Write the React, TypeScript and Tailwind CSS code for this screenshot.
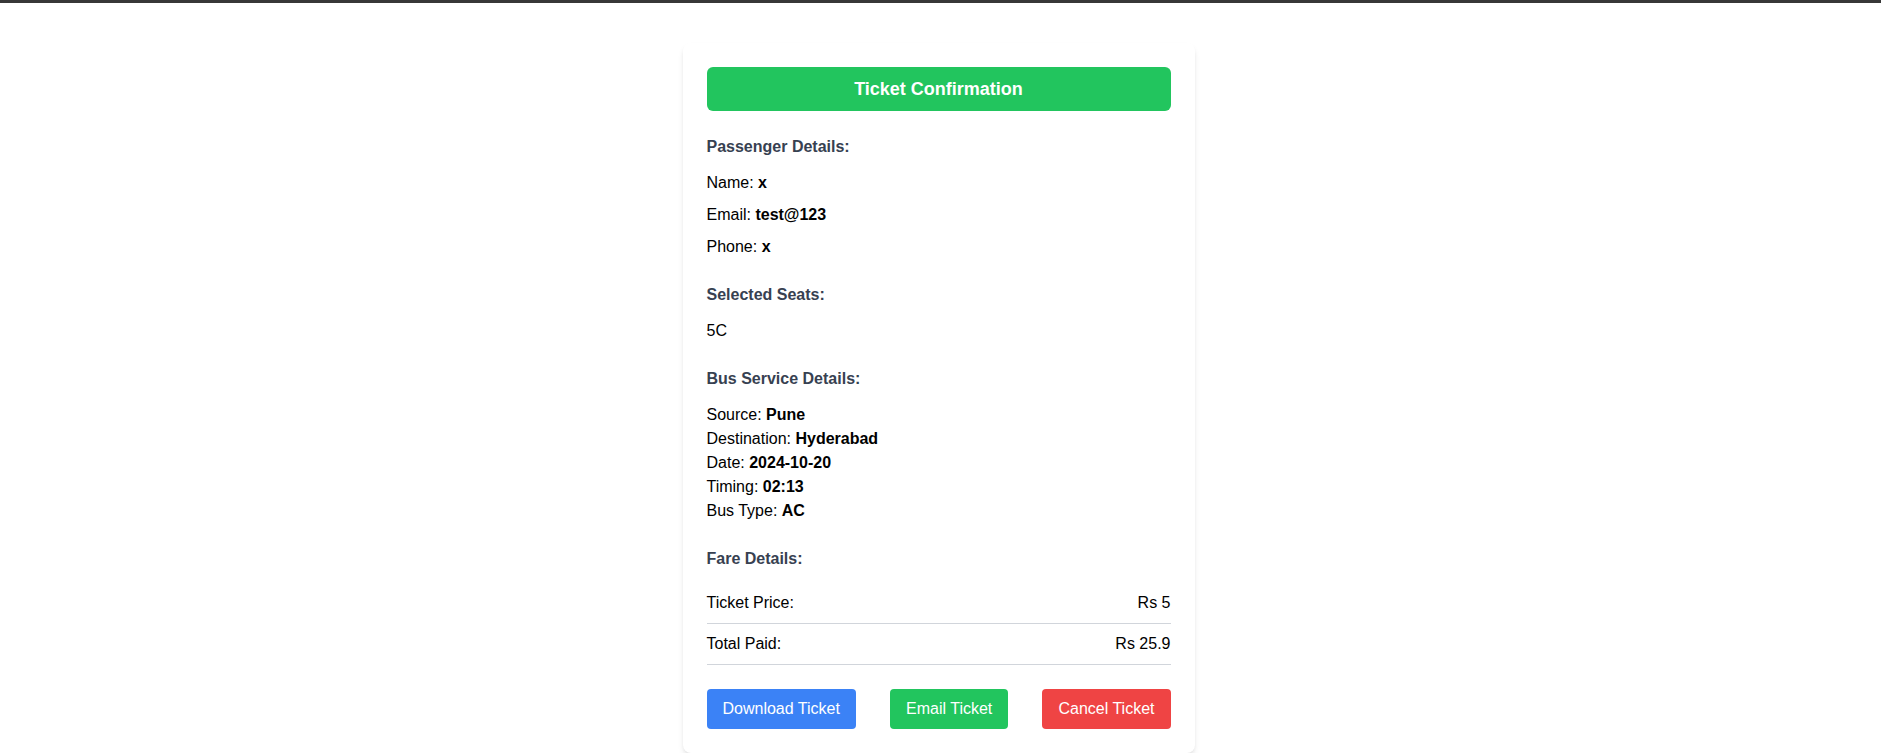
export default function App() {
  const passenger = [
    { label: 'Name', value: 'x' },
    { label: 'Email', value: 'test@123' },
    { label: 'Phone', value: 'x' },
  ];

  const service = [
    { label: 'Source', value: 'Pune' },
    { label: 'Destination', value: 'Hyderabad' },
    { label: 'Date', value: '2024-10-20' },
    { label: 'Timing', value: '02:13' },
    { label: 'Bus Type', value: 'AC' },
  ];

  return (
    <div className="min-h-screen bg-white text-black font-['Liberation_Sans',Arial,sans-serif]">
      <div className="h-[3px] bg-[#383838]" />
      <div className="max-w-lg mx-auto mt-10 bg-white rounded-lg shadow-md p-6 -translate-x-0.5">
        {/* Header */}
        <h1 className="bg-[#22c55e] text-white text-lg font-bold text-center py-2 rounded-md mb-6">
          Ticket Confirmation
        </h1>

        {/* Passenger */}
        <section className="mb-6">
          <h2 className="font-semibold text-[#374151] mb-3">Passenger Details:</h2>
          <div className="space-y-2">
            {passenger.map((p) => (
              <p key={p.label}>
                {p.label}: <span className="font-bold">{p.value}</span>
              </p>
            ))}
          </div>
        </section>

        {/* Seats */}
        <section className="mb-6">
          <h2 className="font-semibold text-[#374151] mb-3">Selected Seats:</h2>
          <p>5C</p>
        </section>

        {/* Bus service */}
        <section className="mb-6">
          <h2 className="font-semibold text-[#374151] mb-3">Bus Service Details:</h2>
          {service.map((s) => (
            <p key={s.label}>
              {s.label}: <span className="font-bold">{s.value}</span>
            </p>
          ))}
        </section>

        {/* Fare */}
        <section>
          <h2 className="font-semibold text-[#374151] mb-3">Fare Details:</h2>
          <div className="flex justify-between py-2 border-b border-[#d1d5db]">
            <span>Ticket Price:</span>
            <span>Rs 5</span>
          </div>
          <div className="flex justify-between py-2 border-b border-[#d1d5db]">
            <span>Total Paid:</span>
            <span>Rs 25.9</span>
          </div>
        </section>

        {/* Actions */}
        <div className="flex justify-between mt-6">
          <button className="bg-[#3b82f6] text-white px-4 py-2 rounded">Download Ticket</button>
          <button className="bg-[#22c55e] text-white px-4 py-2 rounded">Email Ticket</button>
          <button className="bg-[#ef4444] text-white px-4 py-2 rounded">Cancel Ticket</button>
        </div>
      </div>
    </div>
  );
}
